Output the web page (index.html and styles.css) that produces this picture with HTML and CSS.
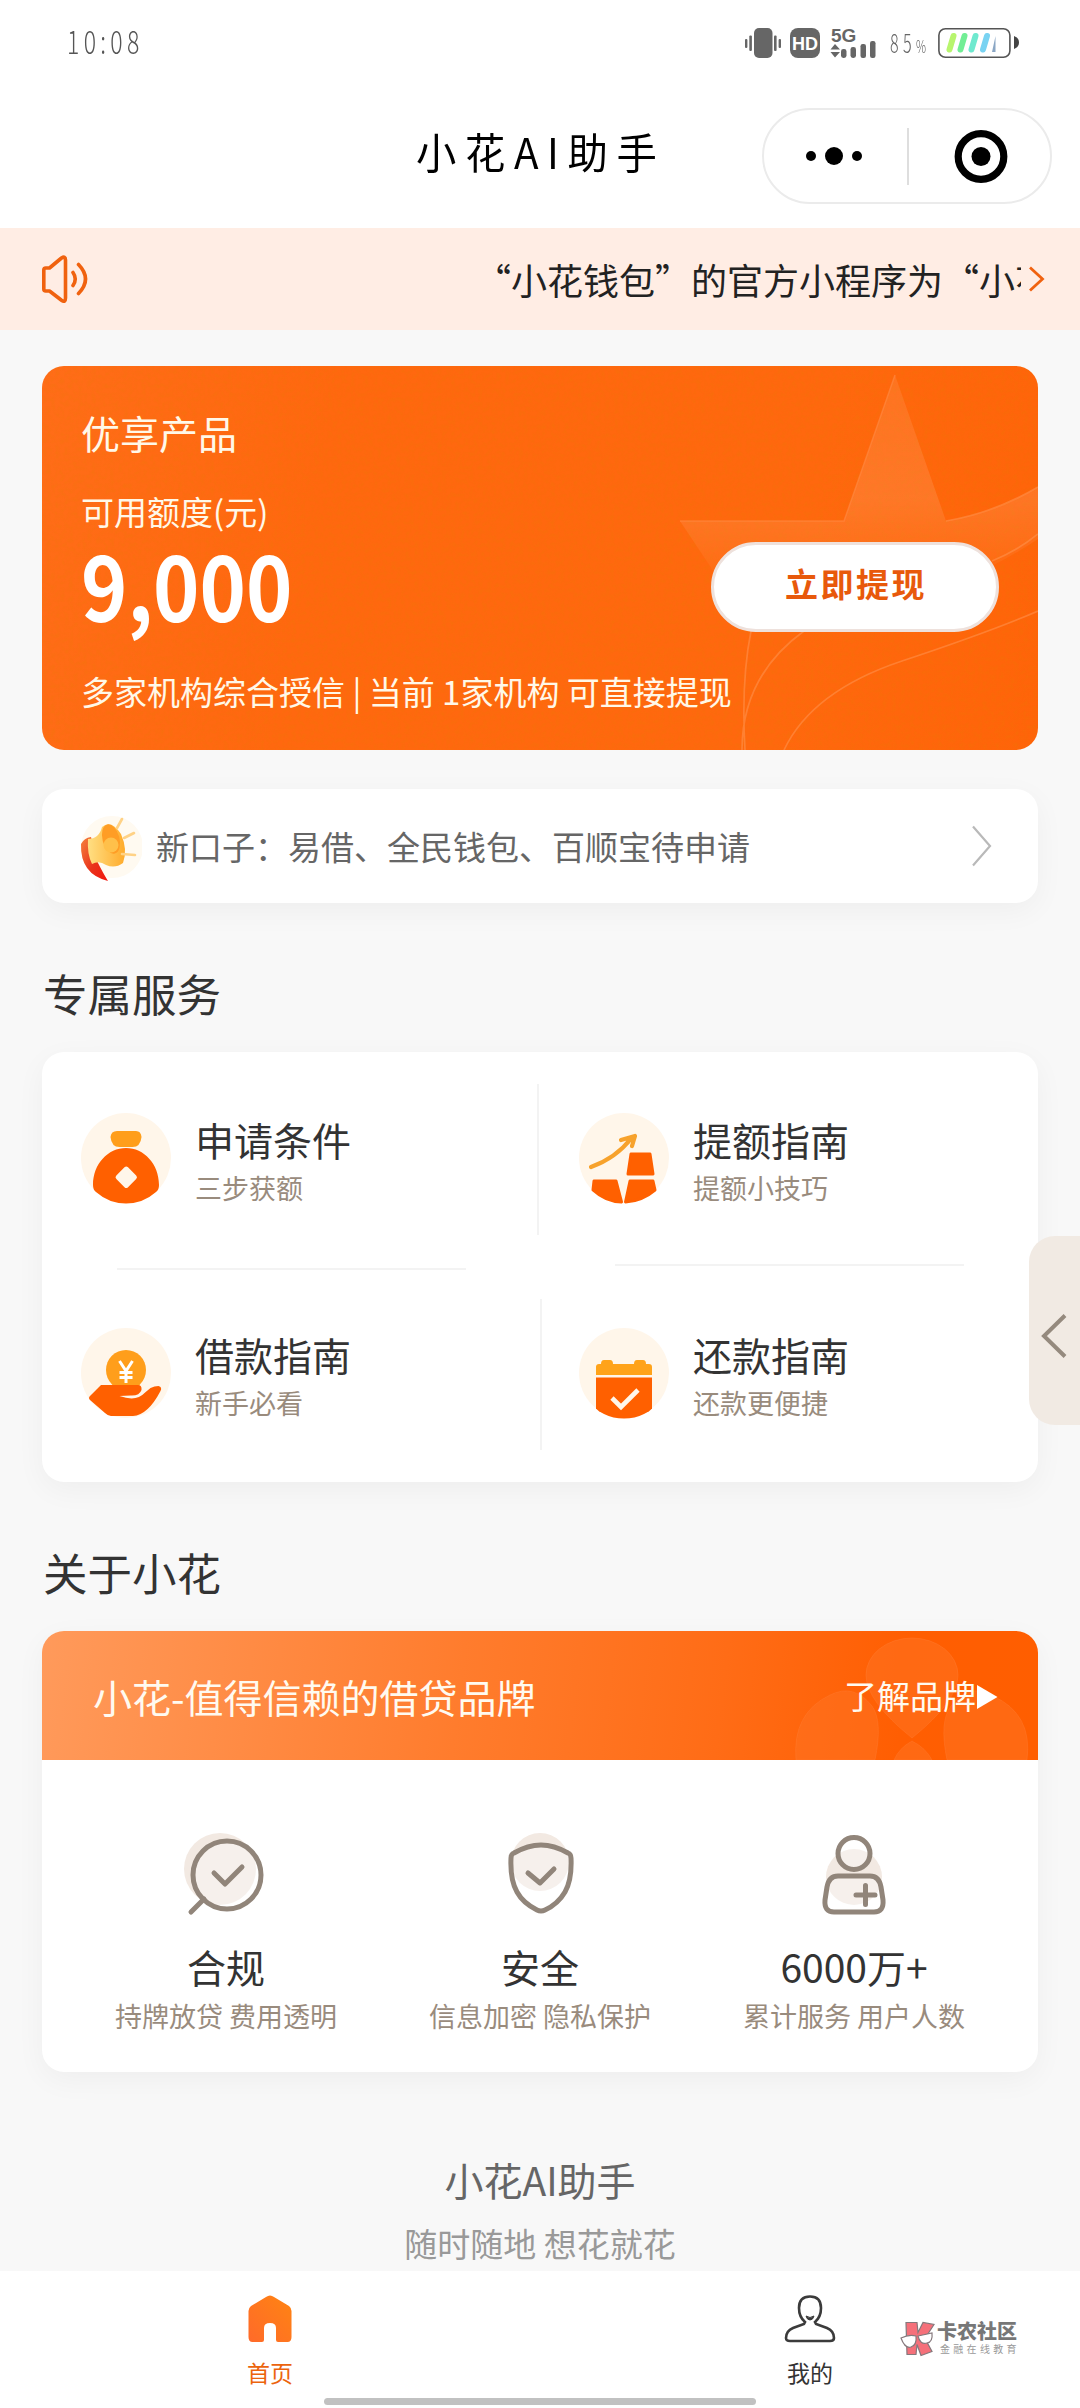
FILE: index.html
```html
<!DOCTYPE html>
<html lang="zh-CN">
<head>
<meta charset="utf-8">
<title>小花AI助手</title>
<link rel="stylesheet" href="styles.css">
</head>
<body>
<div class="status">
  <span class="clock">10:08</span>
  <div class="status-icons">
    <svg width="136" height="34" viewBox="0 0 136 34" fill="#666">
      <rect x="0" y="12" width="2.400" height="9" rx="1"/><rect x="4.300" y="8.500" width="2.600" height="15.500" rx="1"/>
      <rect x="9" y="1" width="18.500" height="30" rx="5"/>
      <rect x="29" y="8.500" width="2.600" height="15.500" rx="1"/><rect x="33.600" y="12" width="2.400" height="9" rx="1"/>
      <rect x="45" y="1" width="30" height="30" rx="8"/>
      <text x="60" y="22.500" class="hd">HD</text>
      <text x="86" y="15" class="net">5G</text>
      <path d="M90 17l5 5.500H85.500zM90 30.500l5-5.500H85.500z"/>
      <rect x="96" y="22" width="5.500" height="9" rx="2.400"/><rect x="105.500" y="20" width="5.500" height="11" rx="2.400"/><rect x="115.500" y="17" width="5.500" height="14" rx="2.200"/><rect x="125" y="14" width="5.500" height="17" rx="2.200"/>
    </svg>
    <span class="percent">85<small>%</small></span>
    <svg width="82" height="34" viewBox="0 0 82 34" fill="none">
      <rect x=".9" y="1.700" width="71" height="28.600" rx="6.500" stroke="#555" stroke-width="1.600"/>
      <path d="M76 9q5 2 5 6.500t-5 6.500z" fill="#444"/>
      <g stroke-width="6" stroke-linecap="round"><path stroke="#b8f56e" d="M11.500 22.500L15.500 9"/><path stroke="#72ee95" d="M22.500 22.500L26.500 9"/><path stroke="#6fe9cf" d="M33.500 22.500L37.500 9"/><path stroke="#79d3f2" d="M45 22.500L49 9"/></g>
      <path d="M54 25l3.500-16V25z" fill="#8aa6c4"/>
    </svg>
  </div>
</div>
<header class="header">
  <h1>小花AI助手</h1>
  <div class="capsule">
    <svg width="144" height="92" viewBox="0 0 144 92"><circle cx="47" cy="46" r="5"/><circle cx="70" cy="46" r="9"/><circle cx="93" cy="46" r="5"/></svg>
    <i></i>
    <svg width="143" height="92" viewBox="0 0 143 92"><circle cx="72" cy="46.500" r="22.800" fill="none" stroke="#000" stroke-width="7.200"/><circle cx="72" cy="46.500" r="9.500"/></svg>
  </div>
</header>
<div class="notice">
  <svg class="speaker" width="48" height="48" viewBox="0 0 48 48" fill="none" stroke="#f0620f" stroke-width="3.600" stroke-linejoin="round" stroke-linecap="round"><path d="M2.800 15q0-2 2-2H8.500L20.500 3q4-2.500 4 2V43q0 5-4 2.200L8.500 36H4.800q-2 0-2-2z"/><path d="M32 17.500q4.500 6.500 0 13M37.500 9.500q14 14.500 0 29"/></svg>
  <div class="ticker"><span>“小花钱包”的官方小程序为“小花AI助手”</span></div>
  <svg width="18" height="28" viewBox="0 0 18 28" fill="none" stroke="#f0620f" stroke-width="2.800"><path d="M2 2.500L14.500 14 2 25.500"/></svg>
</div>
<main>
  <section class="credit">
    <svg class="credit-art" width="996" height="384" viewBox="0 0 996 384" fill="none">
      <defs>
        <linearGradient id="star" x1="0" y1="0" x2="0" y2="1"><stop offset="0" stop-color="#fff" stop-opacity=".08"/><stop offset=".55" stop-color="#fff" stop-opacity=".11"/><stop offset="1" stop-color="#fff" stop-opacity="0"/></linearGradient>
        <filter id="grain" x="0" y="0" width="100%" height="100%"><feTurbulence type="fractalNoise" baseFrequency=".22" numOctaves="2" seed="4"/><feColorMatrix values="0 0 0 0 .75  0 0 0 0 .22  0 0 0 0 0  .9 0 0 0 -.36"/></filter>
      </defs>
      <rect width="996" height="384" filter="url(#grain)" opacity=".45"/>
      <path fill="url(#star)" d="M853 9l51 146q50-8 92-34v52q-60 40-130 60H690L638 155h164z"/>
      <path d="M638 155h164L853 9" stroke="#ff8a45" stroke-width="1.500" opacity=".6"/>
      <g stroke="#ff8d46" stroke-width="1.700" opacity=".65"><path d="M904 155q48-8 92-34M950 195q25-10 46-27M709 265q-10 50-6 119M762 265Q700 310 700 384M742 384Q770 325 860 295T996 245"/></g>
    </svg>
    <h2>优享产品</h2>
    <p class="label">可用额度(元)</p>
    <div class="amount-row"><strong>9,000</strong><button>立即提现</button></div>
    <p class="orgs">多家机构综合授信 | 当前 1家机构 可直接提现</p>
  </section>
  <section class="news">
    <svg width="62" height="72" viewBox="0 0 62 72">
      <defs><linearGradient id="horn" x1="0" x2="1"><stop offset="0" stop-color="#ffdf83"/><stop offset="1" stop-color="#ffab2b"/></linearGradient><linearGradient id="horn-tail" x1="0" x2="1" y2="1"><stop offset="0" stop-color="#f5833d"/><stop offset=".55" stop-color="#e9331c"/><stop offset="1" stop-color="#f3150c"/></linearGradient></defs>
      <circle cx="32" cy="37" r="31" fill="#fffaf1"/>
      <path d="M1 34q3-6 10-7l6 24q6 12 11 20Q0 64 1 34z" fill="url(#horn-tail)"/>
      <path d="M8 29q11 0 14-12 9-8 19 7 7 16 2 29-8 6-17 2-7-5-14-1-5-10-4-25z" fill="url(#horn)"/>
      <ellipse cx="31" cy="29" rx="8.500" ry="15" transform="rotate(-15 31 29)" fill="#ff9d25"/>
      <circle cx="31" cy="35" r="7.500" fill="#ffc04a"/>
      <path d="M37 18l5-9M44 28l10-5M42 44l13 1" stroke="#ffd286" stroke-width="2.600" stroke-linecap="round"/>
    </svg>
    <p>新口子：易借、全民钱包、百顺宝待申请</p>
    <svg width="22" height="42" viewBox="0 0 22 42" fill="none" stroke="#b9b9b9" stroke-width="2.200"><path d="M2 1.500L19 21 2 40.500"/></svg>
  </section>
  <h2 class="section-title">专属服务</h2>
  <section class="services">
    <div class="service">
      <svg width="90" height="92" viewBox="0 0 90 92"><circle cx="45" cy="46" r="45" fill="#fff6ea"/><path d="M36 19h19q5 0 5.500 6-1 10-9 10H38.500q-8 0-9-10 .5-6 6.500-6z" fill="#ff9e1b"/><path d="M45 36c18 0 33 16 33 37q0 5-3 7-13 11.500-30 11.500T15 80q-3-2-3-7c0-21 15-37 33-37z" fill="#ff6000"/><rect x="37" y="57" width="16.500" height="16.500" rx="2.500" fill="#fff6ea" transform="rotate(45 45.250 65.250)"/></svg>
      <div><h3>申请条件</h3><p>三步获额</p></div>
    </div>
    <div class="service">
      <svg width="90" height="92" viewBox="0 0 90 92"><circle cx="45" cy="46" r="45" fill="#fff6ea"/><path d="M12 55Q37 46 52.500 26M42 28l14-4-3 10" fill="none" stroke="#f7a22c" stroke-width="4.200" stroke-linecap="round" stroke-linejoin="round"/><g fill="#ff6000" stroke="#ff6000" stroke-width="3" stroke-linejoin="round"><path d="M52 42h19l3 20H49zM15 69h22l5.500 21Q27 90 14 78zM51 69h23l2 9Q63 89 46.500 90z"/></g></svg>
      <div><h3>提额指南</h3><p>提额小技巧</p></div>
    </div>
    <div class="service">
      <svg width="90" height="92" viewBox="0 0 90 92"><circle cx="45" cy="46" r="45" fill="#fff6ea"/><circle cx="45" cy="43" r="20" fill="#ff9e1b"/><path d="M38.500 34l6.500 10 6.500-10M45 43v13M38.500 45.500h13M38.500 50.500h13" stroke="#fff" stroke-width="3" fill="none"/><path d="M20 58h37q4 0 3.500 5-2 6-11 5.500l-11 .5q17 6 25-3l6-5q4-2 8-2 4 1 2 5Q67 88 52 89H30q-3 0-6-3L9 73q-2-2 0-4z" fill="#ff6000"/></svg>
      <div><h3>借款指南</h3><p>新手必看</p></div>
    </div>
    <div class="service">
      <svg width="90" height="92" viewBox="0 0 90 92"><circle cx="45" cy="46" r="45" fill="#fff6ea"/><path d="M17 40q0-3 3-3h2q0-4 3-4h6q3 0 3 4h21q0-4 3-4h6q3 0 3 4h3q3 0 3 3v8H17z" fill="#ffa31a"/><path d="M17 50.500h56v31q-2 2.500-8 5.500-9 4.500-20 4.500t-20-4.500q-6-3-8-5.500z" fill="#ff6000"/><path d="M33 71l9 9 17-17" stroke="#fff6ea" stroke-width="4.600" fill="none"/></svg>
      <div><h3>还款指南</h3><p>还款更便捷</p></div>
    </div>
  </section>
  <h2 class="section-title">关于小花</h2>
  <section class="about">
    <div class="brand">
      <svg class="flower" width="250" height="129" viewBox="0 0 250 129" fill="#ff7423" fill-opacity=".5" stroke="#ff8239" stroke-opacity=".35"><path d="M124 107Q78 70 78 44a46 37 0 0 1 92 0q0 26-46 63z"/><path d="M87 129Q95 90 84 75 66 52 42 64 4 82 8 129zM159 129q-8-39 4-54 16-24 42-10 40 18 34 64zM106 129q5-12 18-19 14 7 20 19z"/></svg>
      <h3>小花-值得信赖的借贷品牌</h3>
      <a>了解品牌<svg width="22" height="26" viewBox="0 0 22 26"><path d="M1 1l20.500 12L1 25z" fill="#fff"/></svg></a>
    </div>
    <div class="features">
      <div class="feature">
        <svg width="90" height="90" viewBox="0 0 90 90" fill="none" stroke="#91857a" stroke-width="5" stroke-linecap="round" stroke-linejoin="round"><circle cx="39" cy="41" r="36" fill="#f2e9e2" stroke="none"/><circle cx="46" cy="47" r="34" fill="#fff" fill-opacity=".35"/><path d="M23 71L10 84M33 45l11 11 17-17"/></svg>
        <h3>合规</h3><p>持牌放贷 费用透明</p>
      </div>
      <div class="feature">
        <svg width="90" height="90" viewBox="0 0 90 90" fill="none" stroke="#91857a" stroke-width="5" stroke-linecap="round" stroke-linejoin="round"><circle cx="45" cy="34" r="29" fill="#f2e9e2" stroke="none"/><path d="M46 17q13 0 27 8 3 1 3 5 1 22-6 34-7 12-20 18-4 2-8 0-14-7-20-18-7-12-6-34 0-4 3-5 14-8 27-8z" fill="#fff" fill-opacity=".35"/><path d="M33 45l12 10 14-14"/></svg>
        <h3>安全</h3><p>信息加密 隐私保护</p>
      </div>
      <div class="feature">
        <svg width="90" height="90" viewBox="0 0 90 90" fill="none" stroke="#91857a" stroke-width="5" stroke-linecap="round" stroke-linejoin="round"><circle cx="45" cy="49" r="28" fill="#f2e9e2" stroke="none"/><circle cx="45" cy="25.500" r="16" fill="#fff" fill-opacity=".35"/><path d="M29 48h32q9 0 11 11l2 13q1 12-9 12H25q-10 0-9-12l2-13q2-11 11-11z" fill="#fff" fill-opacity=".35"/><path d="M47 67h19M56.500 57.500v19"/></svg>
        <h3>6000万+</h3><p>累计服务 用户人数</p>
      </div>
    </div>
  </section>
  <footer><h3>小花AI助手</h3><p>随时随地 想花就花</p></footer>
</main>
<nav class="tabbar">
  <a class="active"><svg width="48" height="50" viewBox="0 0 48 50"><defs><linearGradient id="home" x1="0" y1="1" x2="1" y2="0"><stop offset="0" stop-color="#ff6a2a"/><stop offset="1" stop-color="#ff8412"/></linearGradient></defs><path d="M20 3q4-3 8 0L43 12q2.500 2 2.500 5v26q0 5-4 5H32q-2 0-2-2V34q0-5-6-5t-6 5v12q0 2-2 2H6.500q-4 0-4-5V17q0-3 2.500-5z" fill="url(#home)"/></svg>首页</a>
  <a><svg width="52" height="50" viewBox="0 0 52 50" fill="none" stroke="#3b3b3b" stroke-width="2.600"><path d="M21 28Q15 23 15 14 15 2.500 26 2.500T37 14q0 9-6 14l1 2 11 4q7 3 7 10 0 3-4 3H6q-4 0-4-3 0-7 7-10l11-4z"/><path d="M22 22q4 3 8 0-1 4-4 4t-4-4z" fill="#3b3b3b" stroke-width="1"/></svg>我的</a>
</nav>
<button class="side-tab"><svg width="28" height="46" viewBox="0 0 28 46" fill="none" stroke="#958a7e" stroke-width="4"><path d="M25 2.500L4 23l21 20.500"/></svg></button>
<div class="watermark">
  <svg width="35" height="36" viewBox="0 0 35 36" stroke="#85787c" stroke-width="1.200"><path d="M6 1.500h11l1 10 5-10 11 2-9 14 7 13-11 4-4-11-1 10H7z" fill="#f5707a"/><path d="M1 17q8-4 15-2 1 9-5 11T1 17zM18 15l14-3q1 9-5 10-7 2-9-7z" fill="#fff"/></svg>
  <div><b>卡农社区</b><small>金融在线教育</small></div>
</div>
<div class="home-indicator"></div>
</body>
</html>
```
FILE: styles.css
```css
* { box-sizing: border-box; margin: 0; padding: 0; }
body {
  width: 1080px; height: 2408px; overflow: hidden; position: relative;
  display: flex; flex-direction: column;
  background: #f8f8f8; color: #333;
  font-family: "Noto Sans CJK SC", "Noto Sans", sans-serif; font-weight: 400;
}
h1, h2, h3 { font-weight: 400; }
svg { display: block; flex: none; }
button { border: 0; font-family: inherit; }

.status { height: 84px; background: #fff; display: flex; justify-content: space-between; align-items: flex-start; padding: 25px 60px 0 67px; }
.clock { font-size: 32px; line-height: 30px; font-weight: 300; letter-spacing: 6px; color: #555; transform: scaleX(.72); transform-origin: 0 50%; }
.status-icons { display: flex; align-items: center; width: 275px; margin-right: 0; }
.status-icons svg:last-child { margin-left: auto; }
.hd { font: bold 18px "Liberation Sans", sans-serif; fill: #fff; text-anchor: middle; }
.net { font: bold 19px "Liberation Sans", sans-serif; }
.percent { font-size: 26px; line-height: 34px; font-weight: 300; letter-spacing: 7px; color: #666; margin-left: 9px; width: 46px; white-space: nowrap; transform: scaleX(.62); transform-origin: 0 50%; }
.percent small { font-size: 18px; }

.header { height: 144px; background: #fff; display: flex; justify-content: space-between; align-items: flex-start; padding: 24px 28px 0 416px; }
.header h1 { color: #000; font-size: 42px; font-weight: 400; line-height: 86px; letter-spacing: 9px; white-space: nowrap; transform: scaleX(.96); transform-origin: 0 50%; }
.capsule { width: 290px; height: 96px; border: 2px solid #ebebeb; border-radius: 48px; display: flex; align-items: center; }
.capsule i { width: 2px; height: 57px; background: #dedede; flex: none; margin-left: -1px; }

.notice { height: 102px; background: #ffede4; display: flex; align-items: center; padding: 0 34px 0 41px; color: #222; }
.ticker { flex: 1; margin: 0 7px 0 386px; overflow: hidden; white-space: nowrap; font-size: 36px; line-height: 50px; }

main { flex: 1; padding: 36px 42px 0; min-height: 0; }
.credit { height: 384px; border-radius: 22px; background: linear-gradient(100deg, #ff6d18, #ff680f 28%, #ff680e 75%, #ff6409); color: #fff8e8; position: relative; overflow: hidden; padding: 40px 41px 0 39px; }
.credit > * { position: relative; }
.credit .credit-art { position: absolute; left: 0; top: 0; }
.credit h2 { font-size: 39px; line-height: 52px; }
.credit .label { font-size: 33px; line-height: 44px; margin-top: 31px; }
.amount-row { display: flex; justify-content: space-between; align-items: flex-start; height: 108px; }
.amount-row strong { color: #fff; font-size: 89px; font-weight: 700; line-height: 102px; transform: scaleX(.885); transform-origin: 0 50%; }
.amount-row button { width: 288px; height: 90px; border-radius: 45px; border: 3px solid #eee1dc; background: #fff; color: #e8590b; font-size: 33px; font-weight: 700; letter-spacing: 2.500px; line-height: 76px; padding: 0 0 8px 2px; margin: 9px -2px 0 0; }
.orgs { font-size: 33px; line-height: 44px; margin-top: 28px; white-space: nowrap; }

.news, .services, .about { background: #fff; border-radius: 22px; box-shadow: 0 8px 30px rgba(0, 0, 0, .045); }
.news { height: 114px; margin-top: 39px; display: flex; align-items: center; padding: 0 45px 0 38px; }
.news p { flex: 1; margin-left: 14px; font-size: 33px; line-height: 44px; color: #666; }
.section-title { height: 149px; padding: 57px 0 0 1px; font-size: 44.500px; line-height: 66px; }

.services { height: 430px; display: grid; grid-template-columns: 1fr 1fr; grid-template-rows: 1fr 1fr; }
.service { position: relative; display: flex; gap: 24px; padding: 60px 0 0 39px; }
.service h3 { font-size: 39px; line-height: 54px; }
.service p { font-size: 27px; line-height: 36px; margin-top: 4px; color: #998b7d; }
.service::before { content: ""; position: absolute; left: 75px; width: 349px; height: 2px; background: #f3f3f3; bottom: -3px; }
.service::after { content: ""; position: absolute; right: 1px; top: 32px; width: 2px; height: 151px; background: #f3f3f3; }
.service:nth-child(2)::before { bottom: 1px; }
.service:nth-child(3)::after { right: -2px; }
.service:nth-child(3)::before, .service:nth-child(4)::before, .service:nth-child(2)::after, .service:nth-child(4)::after { display: none; }

.about { height: 441px; overflow: hidden; }
.brand { height: 129px; position: relative; display: flex; justify-content: space-between; align-items: flex-start; padding: 0 40px 0 51px; color: #fffaf0; background: linear-gradient(97deg, #ff9a5b, #ff7c2d 42%, #ff6c16 68%, #ff5e02 86%, #ff5e00); }
.flower { position: absolute; right: 0; bottom: 0; }
.brand h3 { position: relative; font-size: 39px; line-height: 54px; margin-top: 38px; }
.brand a { position: relative; display: flex; align-items: center; font-size: 33px; line-height: 46px; margin-top: 41px; }
.brand a svg { margin-top: 4px; }
.features { display: grid; grid-template-columns: repeat(3, 314px); justify-content: center; padding-top: 68px; }
.feature { text-align: center; display: flex; flex-direction: column; align-items: center; }
.feature h3 { font-size: 39px; line-height: 54px; margin-top: 21px; }
.feature p { font-size: 27px; line-height: 36px; margin-top: 5px; color: #998b7d; }

footer { text-align: center; padding-top: 80px; }
footer h3 { font-size: 39px; line-height: 54px; color: #666; }
footer p { font-size: 33px; line-height: 44px; margin-top: 15px; color: #999; }

.tabbar { height: 137px; background: #fff; display: grid; grid-template-columns: 1fr 1fr; }
.tabbar a { display: flex; flex-direction: column; align-items: center; padding-top: 23px; font-size: 23px; line-height: 32px; gap: 12px; color: #333; }
.tabbar .active { color: #ec640d; }

.side-tab { position: absolute; right: 0; top: 1236px; width: 51px; height: 189px; border-radius: 26px 0 0 26px; background: #f1eae3; display: flex; align-items: center; padding: 11px 0 0 11px; }
.watermark { position: absolute; left: 900px; top: 2321px; display: flex; gap: 2px; }
.watermark div { display: flex; flex-direction: column; }
.watermark b { font-size: 20px; line-height: 20px; font-weight: 900; color: #777; }
.watermark small { font-size: 10px; line-height: 14px; letter-spacing: 3.300px; margin: 1px 0 0 3px; color: #999; white-space: nowrap; }
.home-indicator { position: absolute; left: 324px; top: 2398px; width: 432px; height: 7px; border-radius: 4px; background: #c1c1c1; }
```
